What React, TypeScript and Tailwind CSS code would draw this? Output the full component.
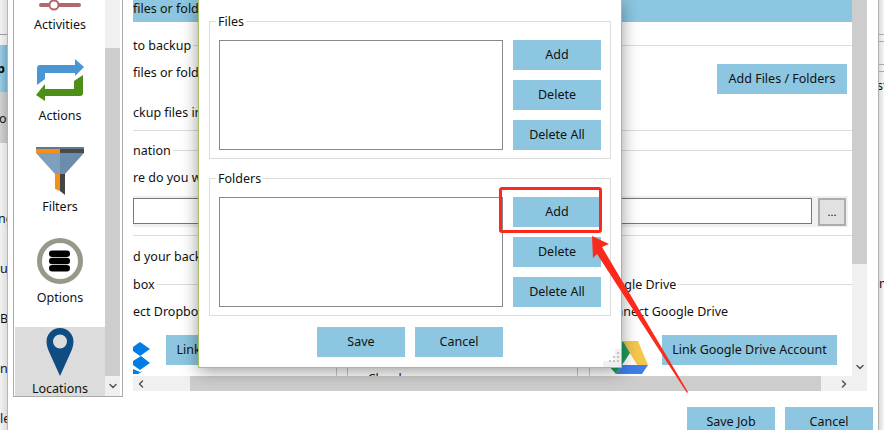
import { ChevronDown, ChevronLeft, ChevronRight } from 'lucide-react';

const Btn = ({ label, w = 'w-[88px]' }: { label: string; w?: string }) => (
  <button className={`${w} h-[30px] shrink-0 bg-[#8cc6e0] text-[12.5px] text-[#111] whitespace-nowrap`}>{label}</button>
);

function GroupBox({ title, mt }: { title: string; mt: string }) {
  return (
    <fieldset className={`${mt} mx-[10px] border border-[#dcdcdc] pl-[9px] pr-[9px] pt-[10px] pb-[8px]`}>
      <legend className="-ml-[3px] px-[2px] h-[18px] leading-[20px] text-[12.5px] text-[#111]">{title}</legend>
      <div className="flex justify-between">
        <div className="w-[284px] h-[110px] border border-[#88888f] bg-white" />
        <div className="flex flex-col gap-[10px]">
          <Btn label="Add" />
          <Btn label="Delete" />
          <Btn label="Delete All" />
        </div>
      </div>
    </fieldset>
  );
}

function SideItem({ label, children, active }: { label: string; children: React.ReactNode; active?: boolean }) {
  return (
    <div className={`h-[91px] shrink-0 w-[90px] flex flex-col items-center ${active ? 'bg-[#dcdcdc]' : ''}`}>
      <div className="h-[50px] shrink-0 w-full flex items-end justify-center">{children}</div>
      <div className="mt-[3px] h-[18px] leading-[18px] text-[12.5px] text-[#111]">{label}</div>
    </div>
  );
}

const Heading = ({ label, mt }: { label: string; mt: string }) => (
  <div className={`${mt} h-[18px] flex items-center gap-[2px]`}>
    <span className="h-[18px] leading-[20px] whitespace-nowrap">{label}</span>
    <div className="flex-1 h-px bg-[#dcdcdc]" />
  </div>
);

export default function App() {
  return (
    <div className="relative w-[884px] h-[432px] overflow-hidden bg-white flex text-[12.5px] text-[#111] font-['Noto_Sans',sans-serif]">
      {/* window behind, left edge */}
      <div className="w-[8px] h-[430px] shrink-0 overflow-hidden flex flex-col border-r border-[#b5b5b5] bg-linear-to-r from-[#f2f2f2] to-[#dddddd] leading-[18px]">
        <div className="h-[34px] shrink-0" />
        <div className="h-px shrink-0 bg-[#999]" />
        <div className="h-[10px] shrink-0" />
        <div className="h-[47px] shrink-0 flex items-center bg-linear-to-r from-[#9ccbe0] to-[#6fa9c4]">
          <span className="-ml-[3px] font-bold text-black">p</span>
        </div>
        <div className="h-[51px] shrink-0 pt-[2px] flex items-center bg-linear-to-r from-[#d0d0d0] to-[#b5b5b5]">
          <span className="-ml-[1px]">os</span>
        </div>
        <div className="h-[50px] shrink-0" />
        <div className="h-[50px] shrink-0 pt-[2px] flex items-center"><span className="-ml-[2px]">ng</span></div>
        <div className="h-[50px] shrink-0 pt-[2px] flex items-center"><span>u</span></div>
        <div className="h-[50px] shrink-0 pt-[2px] flex items-center"><span>B</span></div>
        <div className="h-[50px] shrink-0 pt-[2px] flex items-center"><span>n</span></div>
        <div className="h-[50px] shrink-0 pt-[2px] flex items-center"><span>le</span></div>
      </div>

      {/* main window */}
      <div className="w-[870px] shrink-0 flex flex-col">
        <div className="h-[397px] shrink-0 flex">
          {/* sidebar */}
          <div className="ml-[5px] w-[110px] h-[397px] shrink-0 flex border-x border-b border-[#ababab] overflow-hidden">
            <div className="w-[91px] shrink-0 pl-[1px] -mt-[37px] flex flex-col">
              <SideItem label="Activities">
                <svg width="46" height="12" viewBox="0 0 46 12" className="mb-[2px]">
                  <rect x="2" y="4" width="42" height="4" rx="2" fill="#b0686e" />
                  <circle cx="17" cy="6" r="4.5" fill="#fff" stroke="#b0686e" strokeWidth="2" />
                </svg>
              </SideItem>
              <SideItem label="Actions">
                <svg width="48" height="42" viewBox="0 0 48 42" className="mb-[3px]">
                  <path d="M1 26V9q0-3 3-3H39V0L48 8L39 17V14H9V20z" fill="#4a96d2" />
                  <path d="M47 16V34q0 3-3 3H9V42L0 36L9 25V30H38V22z" fill="#4d8f17" />
                </svg>
              </SideItem>
              <SideItem label="Filters">
                <svg width="48" height="48" viewBox="0 0 48 48">
                  <path d="M0 0h48v2H0z" fill="#5f7a90" />
                  <path d="M0 2h24v4H0z" fill="#f58f16" />
                  <path d="M24 2h24v4H24z" fill="#4a4a4a" />
                  <path d="M0 6h24v21h-5z" fill="#7f9fbe" />
                  <path d="M24 6h24L29 27h-5z" fill="#6c8cae" />
                  <path d="M19 27h5v17l-5-2z" fill="#f58f16" />
                  <path d="M24 27h5v21l-5-4z" fill="#444" />
                </svg>
              </SideItem>
              <SideItem label="Options">
                <svg width="48" height="48" viewBox="0 0 48 48" className="mb-[1px]">
                  <circle cx="24" cy="24" r="20.500" fill="#fff" stroke="#98988a" strokeWidth="5" />
                  <rect x="13" y="13.500" width="21" height="6.500" rx="3.200" fill="#000" />
                  <rect x="13" y="20.800" width="21" height="6.500" rx="3.200" fill="#000" />
                  <rect x="13" y="28" width="21" height="6.500" rx="3.200" fill="#000" />
                </svg>
              </SideItem>
              <SideItem label="Locations" active>
                <svg width="28" height="48" viewBox="0 0 28 48" className="mb-[1px]">
                  <path fillRule="evenodd" d="M14 0c7.500 0 13.500 6 13.500 13.500 0 5-2 9-4 13.500L14 48 4.500 27C2.500 22.500.5 18.500.5 13.500.5 6 6.500 0 14 0zm0 6.500a7 7 0 1 0 0 14 7 7 0 0 0 0-14z" fill="#0f4c81" />
                </svg>
              </SideItem>
            </div>
            <div className="w-[15px] shrink-0 mr-[2px] bg-[#f0f0f0] flex flex-col">
              <div className="h-[48px] shrink-0" />
              <div className="h-[328px] shrink-0 bg-[#cdcdcd]" />
              <div className="flex-1 flex items-center justify-center text-[#555]">
                <ChevronDown size={12} strokeWidth={3} />
              </div>
            </div>
          </div>

          {/* settings panel */}
          <div className="ml-[10px] w-[734px] shrink-0 flex flex-col">
            <div className="h-[376px] shrink-0 flex">
              <div className="w-[719px] shrink-0 flex flex-col overflow-hidden">
                <div className="h-[22px] shrink-0 bg-[#8cc6e0] leading-[18px] whitespace-nowrap">files or folders</div>
                <Heading label="to backup" mt="mt-[14px]" />
                <div className="mt-[10px] h-[30px] shrink-0 flex justify-between pr-[5px]">
                  <span className="-mt-[1px] h-[18px] leading-[20px] whitespace-nowrap">files or folders</span>
                  <Btn label="Add Files / Folders" w="w-[130px]" />
                </div>
                <div className="mt-[9px] h-[18px] leading-[20px] whitespace-nowrap">ckup files in this list</div>
                <div className="mt-[9px] h-px shrink-0 bg-[#dcdcdc]" />
                <Heading label="nation" mt="mt-[10px]" />
                <div className="mt-[9px] h-[18px] leading-[20px] whitespace-nowrap">re do you want to store</div>
                <div className="mt-[10px] h-[31px] shrink-0 flex items-center gap-[6px] bg-[#f0f0f0] mr-[4px]">
                  <div className="w-[679px] h-[26px] -mt-[1px] border border-[#777] bg-white" />
                  <div className="w-[28px] h-[28px] border-2 border-[#adadad] bg-[#e1e1e1] flex items-center justify-center text-[11px] leading-none">...</div>
                </div>
                <div className="mt-[8px] h-px shrink-0 bg-[#dcdcdc]" />
                <div className="mt-[11px] h-[18px] leading-[20px] whitespace-nowrap">d your backup</div>
                <div className="flex">
                  <div className="w-[467px] shrink-0 flex flex-col">
                    <Heading label="box" mt="mt-[10px]" />
                    <div className="mt-[9px] h-[18px] leading-[20px] whitespace-nowrap">ect Dropbox</div>
                    <div className="mt-[15px] h-[30px] flex">
                      <svg width="18" height="32" viewBox="0 0 18 32" className="mt-[7px] shrink-0">
                        <path d="M7 0l10 7-10 7-7-5V5z" fill="#007ee5" />
                        <path d="M8 14l9 7-10 7-7-5v-4z" fill="#007ee5" />
                        <path d="M0 27l7 3 3-1L5 32H0z" fill="#007ee5" />
                      </svg>
                      <Btn label="Link Dropbox Account" w="ml-[15px] w-[150px]" />
                    </div>
                  </div>
                  <div className="flex-1 flex flex-col">
                    <Heading label="Google Drive" mt="mt-[10px]" />
                    <div className="mt-[9px] h-[18px] leading-[20px] whitespace-nowrap">Connect Google Drive</div>
                    <div className="mt-[15px] h-[30px] flex">
                      <svg width="42" height="34" viewBox="0 0 42 34" className="ml-[8px] mt-[6px] shrink-0">
                        <path d="M15 0H30L40 24H29z" fill="#f5c84c" />
                        <path d="M8 33L14 24H40L34 33z" fill="#3f7fe8" />
                        <path d="M15 0L22 12L8 33L0 24z" fill="#1f9e5f" />
                      </svg>
                      <Btn label="Link Google Drive Account" w="ml-[12px] w-[175px]" />
                    </div>
                  </div>
                </div>
                <div className="mt-[3px] h-[8px] shrink-0 flex overflow-hidden">
                  <div className="ml-[203px] w-px bg-[#c8c8c8]" />
                  <div className="ml-[10px] w-px bg-[#c8c8c8]" />
                  <div className="ml-[12px] mt-[2px] leading-[18px]">pCloud</div>
                  <div className="ml-[175px] w-px bg-[#c8c8c8]" />
                  <div className="ml-[11px] w-px bg-[#c8c8c8]" />
                </div>
              </div>
              <div className="w-[15px] shrink-0 bg-[#f0f0f0] flex flex-col">
                <div className="h-[264px] shrink-0 bg-[#cdcdcd]" />
                <div className="flex-1 flex items-end justify-center pb-[3px] text-[#555]">
                  <ChevronDown size={12} strokeWidth={3} />
                </div>
              </div>
            </div>
            <div className="h-[15px] shrink-0 bg-[#f0f0f0] flex items-center text-[#555]">
              <div className="w-[57px] shrink-0 pl-[2px]"><ChevronLeft size={12} strokeWidth={3} /></div>
              <div className="w-[631px] h-full shrink-0 bg-[#cdcdcd]" />
              <div className="flex-1 flex justify-center"><ChevronRight size={12} strokeWidth={3} /></div>
            </div>
          </div>
        </div>

        <div className="mt-[10px] h-[23px] overflow-hidden flex justify-end gap-[10px] pr-[5px]">
          <Btn label="Save Job" />
          <Btn label="Cancel" />
        </div>
      </div>

      {/* window behind, right edge */}
      <div className="w-[6px] h-[430px] shrink-0 overflow-hidden flex flex-col border-l border-[#b0b0b0] bg-linear-to-r from-[#dcdcdc] to-[#f6f6f6] leading-[18px]">
        <div className="h-[34px] shrink-0" />
        <div className="h-px shrink-0 bg-[#aaa]" />
        <div className="h-[6px] shrink-0" />
        <div className="h-px shrink-0 bg-[#aaa]" />
        <div className="h-[22px] shrink-0" />
        <div className="h-px shrink-0 bg-[#aaa]" />
        <div className="h-[6px] shrink-0" />
        <div className="h-px shrink-0 bg-[#aaa]" />
        <div className="h-[18px] shrink-0 mt-[5px] -ml-[2px]">st</div>
        <div className="h-[18px] shrink-0 mt-[180px]">m</div>
      </div>

      {/* dialog over the window */}
      <div className="absolute left-[198px] top-0 w-[424px] h-[368px] bg-white border-x border-b border-[#a9c06a] shadow-[0_3px_16px_rgba(0,0,0,0.4)] flex flex-col">
        <GroupBox title="Files" mt="mt-[12px]" />
        <GroupBox title="Folders" mt="mt-[10px]" />
        <div className="mt-[11px] flex gap-[10px] pl-[118px]">
          <Btn label="Save" />
          <Btn label="Cancel" />
        </div>
        <svg width="18" height="18" viewBox="0 0 18 18" className="absolute right-0 bottom-0">
          <path d="M0 12h12V0h6v18H0z" fill="#f0f0f0" />
          <path d="M14 3h2v2h-2zM14 7h2v2h-2zM10 7h2v2h-2zM14 11h2v2h-2zM10 11h2v2h-2zM6 11h2v2H6z" fill="#c4c4c4" />
        </svg>
      </div>

      {/* annotation */}
      <div className="absolute left-[499px] top-[187px] w-[103px] h-[46px] border-[3px] border-[#fb2a1c] rounded-[3px]" />
      <svg width="884" height="432" viewBox="0 0 884 432" className="absolute left-0 top-0 pointer-events-none">
        <path d="M592 236l17 8-7 3 86 145-1 1-90-139-4 4z" fill="#fb2a1c" />
      </svg>
    </div>
  );
}
